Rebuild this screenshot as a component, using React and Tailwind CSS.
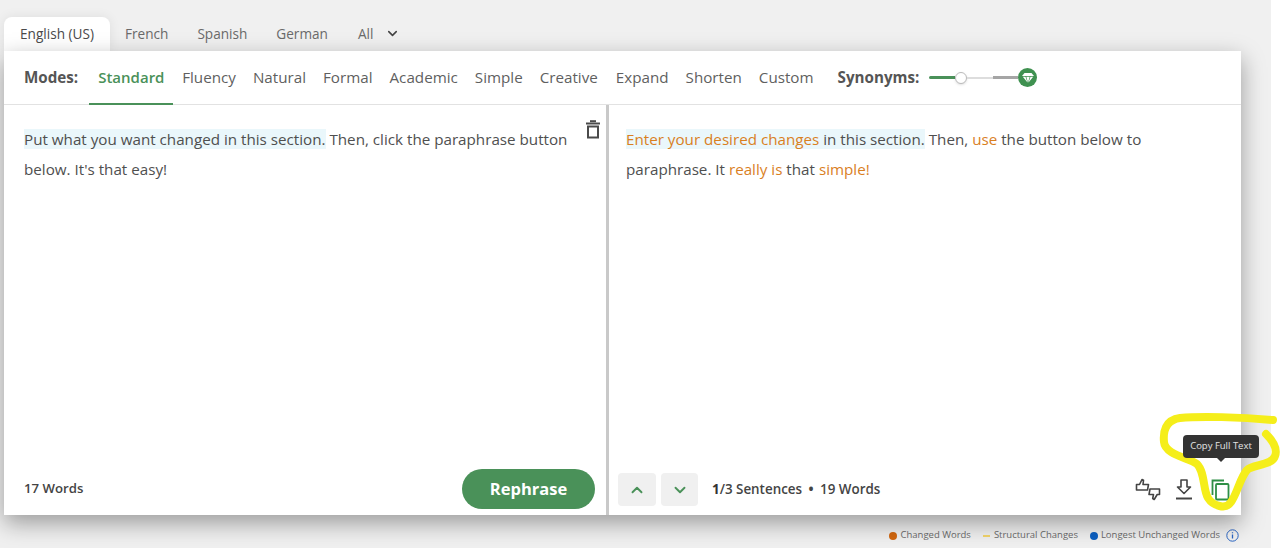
import React from "react";
import { ChevronDown, ChevronUp } from "lucide-react";

const langs = ["French", "Spanish", "German"];
const modes = ["Fluency", "Natural", "Formal", "Academic", "Simple", "Creative", "Expand", "Shorten", "Custom"];

const Orange = ({ children }) => <span className="text-[#d9801f]">{children}</span>;

const TrashIcon = () => (
  <svg width="16" height="20" viewBox="0 0 16 20" fill="none" stroke="#4a4a4a" strokeWidth="2">
    <path d="M1 3.500h14" />
    <path d="M5 1.200h6" />
    <rect x="3" y="6.500" width="10" height="11" />
  </svg>
);

const DiamondIcon = () => (
  <svg width="12" height="10" viewBox="0 0 12 10" fill="#fff">
    <path d="M2.500 0h7L12 3H0z" />
    <path d="M.8 3.800h2.700L5.500 9.500zM4.300 3.800h3.400L6 9.800zM8.500 3.800h2.700L6.500 9.500z" />
  </svg>
);

const FeedbackIcon = () => (
  <svg width="26" height="23" viewBox="0 0 26 23" fill="none" stroke="#444" strokeWidth="1.600" strokeLinejoin="round">
    <path d="M1.500 6.500h3l2.500-5 1.500.8-.5 4.200h5.500l-1 5.500H1.500z" />
    <path d="M24.500 11h-9.500l-1 5.500h4.500l-.8 4 1.500 1 3-5h2.300z" />
  </svg>
);

const DownloadIcon = () => (
  <svg width="18" height="21" viewBox="0 0 18 21" fill="none" stroke="#444" strokeWidth="1.600" strokeLinejoin="round">
    <path d="M6 1h6v7h3.500L9 14.500 2.500 8H6z" />
    <path d="M1 19.500h16" strokeWidth="2" />
  </svg>
);

const CopyIcon = () => (
  <svg width="19" height="22" viewBox="0 0 19 22" fill="none" stroke="#2f8f46" strokeWidth="1.800">
    <path d="M1.500 16V1.500H13" />
    <rect x="5" y="5" width="12.500" height="15.500" rx="1" />
  </svg>
);

const InfoIcon = () => (
  <svg width="13" height="13" viewBox="0 0 13 13" fill="none" stroke="#2b66c4" strokeWidth="1">
    <circle cx="6.500" cy="6.500" r="5.700" />
    <path d="M6.500 5.500v4M6.500 3.300v1" strokeWidth="1.300" />
  </svg>
);

// the yellow marker scribble around the copy button
const Scribble = () => (
  <svg className="absolute left-[1155px] top-[408px] pointer-events-none" width="125" height="105" viewBox="1155 408 125 105" fill="none">
    <path
      d="M1273 420C1240 417 1200 416 1180 418C1165 420 1163 432 1164 442C1165 455 1190 458 1197 464C1205 472 1203 490 1208 498C1213 506 1226 510 1231 502C1237 494 1240 478 1247 470C1253 464 1272 466 1275 456C1278 448 1272 440 1266 434"
      stroke="#f5ee1a"
      strokeWidth="8"
      strokeLinecap="round"
      strokeLinejoin="round"
    />
  </svg>
);

export default function App() {
  return (
    <div className="relative flex w-[1280px] h-[548px] overflow-hidden bg-white font-['Open_Sans',sans-serif] text-[#4a4a4a]">
      <div className="w-[1271px] h-full bg-[#f0f0f0] pl-1 pt-[17px]">
        <div className="flex items-center h-[34px] text-[13.600px] text-[#6a6a6a]">
          <div className="flex items-center justify-center w-[106px] h-full bg-white rounded-t-lg text-[#4a4a4a] shadow-[0_0_12px_rgba(0,0,0,0.08)]">English (US)</div>
          <div className="flex gap-[29px] pl-[15px]">
            {langs.map((l) => (
              <span key={l}>{l}</span>
            ))}
          </div>
          <div className="flex items-center gap-3 ml-[30px]">
            <span>All</span>
            <ChevronDown size={15} strokeWidth={2.500} className="text-[#444]" />
          </div>
        </div>

        <div className="relative w-[1237px] h-[464px] bg-white flex flex-col shadow-[0_8px_22px_rgba(0,0,0,0.36)]">
          <div className="flex items-stretch h-[54px] border-b border-[#e2e2e2] text-[15.200px] shrink-0">
            <span className="self-center ml-5 font-bold text-[#555]">Modes:</span>
            <span className="flex items-center ml-[11px] pl-[9px] w-[84px] border-b-2 border-[#4a9159] h-[54px] text-[15px] text-[#4a9159] font-semibold">Standard</span>
            <div className="flex items-center gap-[17px] ml-[9px] text-[#5f5f5f]">
              {modes.map((m, i) => (
                <span key={m} className={i === 6 ? "ml-px" : ""}>{m}</span>
              ))}
            </div>
            <span className="self-center ml-[24px] font-bold text-[#555]">Synonyms:</span>
            <div className="self-center flex items-center ml-[10px]">
              <div className="w-[26px] h-[3px] bg-[#4a9159] rounded-l" />
              <div className="w-[12px] h-[12px] rounded-full bg-white border border-[#bbb] shadow-sm" />
              <div className="w-[26px] h-[2px] bg-[#ddd]" />
              <div className="w-[25px] h-[3px] bg-[#a5a5a5]" />
              <div className="flex items-center justify-center w-[19px] h-[19px] rounded-full bg-[#3f9150]">
                <DiamondIcon />
              </div>
            </div>
          </div>

          <div className="flex flex-1 min-h-0">
            <div className="relative flex flex-col w-[605px] pl-5 pr-[11px] border-r-[3px] border-[#c9c9c9]">
              <p className="mt-[19px] w-[560px] text-[15.200px] leading-[30px] text-[#4f4f4f]">
                <span className="bg-[#eaf7fb]">Put what you want changed in this section.</span> Then, click the paraphrase button below. It's that easy!
              </p>
              <div className="absolute right-[5px] top-[15px]">
                <TrashIcon />
              </div>
              <div className="flex items-center justify-between mt-auto mb-[6px] h-[40px]">
                <span className="text-[13.200px] font-semibold text-[#444]">17 Words</span>
                <button className="w-[133px] h-[40px] rounded-full bg-[#4a9159] text-white text-[16.500px] font-bold">Rephrase</button>
              </div>
            </div>

            <div className="relative flex flex-col flex-1 pl-[17px] pr-2">
              <p className="mt-[19px] w-[560px] text-[15.200px] leading-[30px] text-[#4f4f4f]">
                <span className="bg-[#eaf7fb]"><Orange>Enter your desired changes</Orange> in this section.</span> Then, <Orange>use</Orange> the button below to paraphrase. It <Orange>really is</Orange> that <Orange>simple!</Orange>
              </p>
              <div className="flex items-center mt-auto mb-[9px] -ml-2 h-[33px]">
                <button className="flex items-center justify-center w-[38px] h-[33px] rounded bg-[#f0f0f0] text-[#4a9159]">
                  <ChevronUp size={18} strokeWidth={2.500} />
                </button>
                <button className="flex items-center justify-center w-[37px] h-[33px] ml-[5px] rounded bg-[#f0f0f0] text-[#4a9159]">
                  <ChevronDown size={18} strokeWidth={2.500} />
                </button>
                <span className="ml-[14px] text-[13.400px] font-semibold text-[#444]">
                  <span className="font-bold text-[#333]">1</span>/3 Sentences <span className="mx-[3px] font-bold">•</span> 19 Words
                </span>
                <div className="flex items-center ml-auto mr-[3px]">
                  <FeedbackIcon />
                  <span className="ml-[14px]"><DownloadIcon /></span>
                  <span className="ml-[18px]"><CopyIcon /></span>
                </div>
              </div>
            </div>
          </div>
        </div>

        <div className="flex items-center justify-end w-[1237px] h-[39px] pr-[2px] pt-[2px] text-[9.500px] text-[#6a6a6a]">
          <span className="w-[8px] h-[8px] rounded-full bg-[#d2670f] mr-[3px]" />
          <span>Changed Words</span>
          <span className="w-[7px] h-[2px] bg-[#f3d56b] ml-[12px] mr-[4px]" />
          <span>Structural Changes</span>
          <span className="w-[8px] h-[8px] rounded-full bg-[#0b5fc2] ml-[12px] mr-[3px]" />
          <span>Longest Unchanged Words</span>
          <span className="ml-[6px]"><InfoIcon /></span>
        </div>
      </div>

      <Scribble />
      <div className="absolute left-[1183px] top-[435px] flex items-center justify-center w-[76px] h-[23px] rounded bg-[#333] text-[#e4e4e4] text-[9.500px]">
        Copy Full Text
        <span className="absolute left-1/2 -translate-x-1/2 top-full w-0 h-0 border-x-[4px] border-x-transparent border-t-[4px] border-t-[#333]" />
      </div>
    </div>
  );
}
